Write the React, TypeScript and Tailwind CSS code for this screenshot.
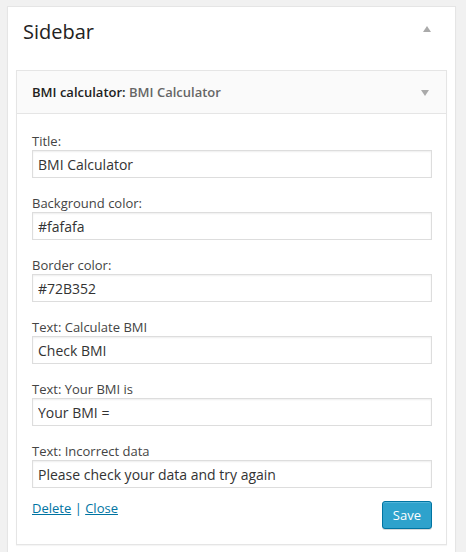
const fields = [
  { label: "Title:", value: "BMI Calculator" },
  { label: "Background color:", value: "#fafafa" },
  { label: "Border color:", value: "#72B352" },
  { label: "Text: Calculate BMI", value: "Check BMI" },
  { label: "Text: Your BMI is", value: "Your BMI =" },
  { label: "Text: Incorrect data", value: "Please check your data and try again" },
];

export default function App() {
  return (
    <div className="min-h-[552px] bg-[#f1f1f1] pl-[7px] pr-[10px] pt-[6px] font-['Open_Sans',sans-serif] text-[#444]">
      <div className="min-h-[560px] border border-[#e5e5e5] bg-white shadow-[0_1px_1px_rgba(0,0,0,0.04)]">
        {/* sidebar heading */}
        <div className="flex items-start justify-between pl-[15px] pr-[24px] pt-[11px]">
          <h2 className="text-[20px] leading-[28px] font-normal text-[#222]">Sidebar</h2>
          <span className="mt-[8px] block h-0 w-0 border-x-[4px] border-b-[6px] border-x-transparent border-b-[#aaa]" />
        </div>

        {/* widget */}
        <div className="mx-[8px] mt-[24px] border border-[#e5e5e5] shadow-[0_1px_1px_rgba(0,0,0,0.04)]">
          <div className="flex h-[43px] items-center justify-between border-b border-[#e5e5e5] bg-[#fafafa] pl-[15px] pr-[17px]">
            <h3 className="text-[13px] leading-[42px] font-semibold text-[#222]">
              BMI calculator: <span className="text-[#666]">BMI Calculator</span>
            </h3>
            <span className="mt-[1px] block h-0 w-0 border-x-[4px] border-t-[6px] border-x-transparent border-t-[#aaa]" />
          </div>

          <div className="pl-[15px] pr-[14px] pt-[18px] pb-[15px]">
            <div className="flex flex-col gap-[16px]">
              {fields.map((f) => (
                <div key={f.label}>
                  <label className="block text-[13px] leading-[18px] text-[#444]">{f.label}</label>
                  <input
                    readOnly
                    value={f.value}
                    className="block h-[28px] w-full border border-[#ddd] bg-white px-[5px] text-[14px] text-[#333] shadow-[inset_0_1px_2px_rgba(0,0,0,0.07)] outline-none"
                  />
                </div>
              ))}
            </div>

            <div className="mt-[11px] flex items-start justify-between">
              <div className="text-[13px] leading-[18px]">
                <a href="#" className="text-[#0074a2] underline">Delete</a>
                <span className="text-[#0074a2]"> | </span>
                <a href="#" className="text-[#0074a2] underline">Close</a>
              </div>
              <button className="mt-[2px] h-[28px] rounded-[3px] border border-[#0074a2] bg-[#2ea2cc] px-[10px] text-[13px] leading-[26px] text-white shadow-[inset_0_1px_0_rgba(120,200,230,0.5),0_1px_0_rgba(0,0,0,0.15)]">
                Save
              </button>
            </div>
          </div>
        </div>
      </div>
    </div>
  );
}
